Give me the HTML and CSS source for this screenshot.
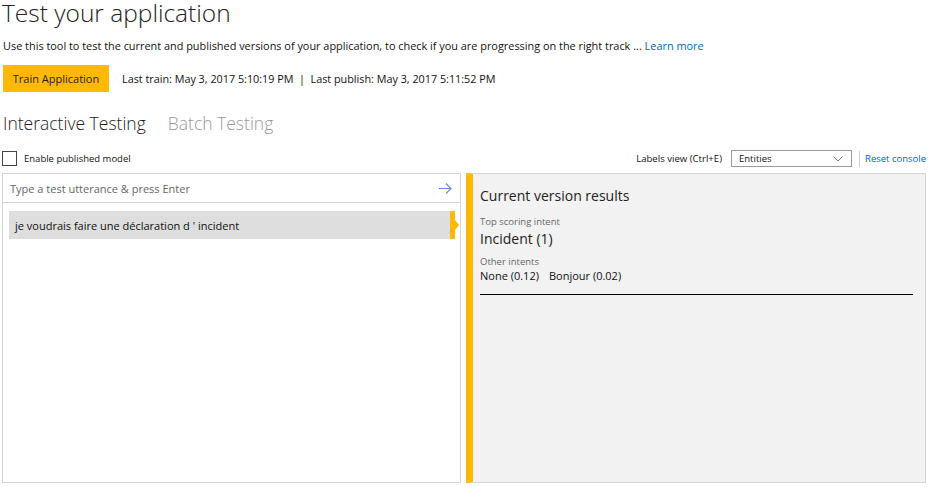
FILE: index.html
```html
<!DOCTYPE html>
<html>
<head>
<meta charset="utf-8">
<link rel="stylesheet" href="styles.css">
</head>
<body>
<div class="page">
  <h1 class="title">Test your application</h1>
  <p class="desc">Use this tool to test the current and published versions of your application, to check if you are progressing on the right track ... <a class="link" href="#">Learn more</a></p>
  <div class="trainrow">
    <button class="trainbtn">Train Application</button>
    <span class="traininfo">Last train: May 3, 2017 5:10:19 PM&nbsp; |&nbsp; Last publish: May 3, 2017 5:11:52 PM</span>
  </div>
  <div class="tabs">
    <span class="tab active">Interactive Testing</span>
    <span class="tab">Batch Testing</span>
  </div>
  <div class="controls">
    <label class="enable"><span class="checkbox"></span><span>Enable published model</span></label>
    <div class="rightctl">
      <span class="lvlabel">Labels view (Ctrl+E)</span>
      <div class="select"><span>Entities</span>
        <svg class="chev" width="10" height="6" viewBox="0 0 10 6"><path d="M0.5 0.5 L5 5 L9.5 0.5" fill="none" stroke="#777" stroke-width="1"/></svg>
      </div>
      <span class="sep"></span>
      <a class="reset" href="#">Reset console</a>
    </div>
  </div>
  <div class="panels">
    <div class="left">
      <div class="inputrow">
        <span class="placeholder">Type a test utterance &amp; press Enter</span>
        <svg class="arrow" width="13" height="11" viewBox="0 0 13 11"><path d="M0 5.5 H12 M7 0.5 L12 5.5 L7 10.5" fill="none" stroke="#6f86d6" stroke-width="1.1"/></svg>
      </div>
      <div class="utterances">
        <div class="utt">je voudrais faire une déclaration d ' incident</div>
      </div>
    </div>
    <div class="right">
      <h2 class="rtitle">Current version results</h2>
      <div class="small">Top scoring intent</div>
      <div class="top">Incident (1)</div>
      <div class="small other">Other intents</div>
      <div class="others"><span>None (0.12)</span><span>Bonjour (0.02)</span></div>
      <div class="rule"></div>
    </div>
  </div>
</div>
</body>
</html>
```
FILE: styles.css
```css
html, body { margin: 0; padding: 0; background: #fff; }
body { font-family: "Open Sans", "Noto Sans", sans-serif; color: #111; }
.page { padding: 0 7px 0 2px; width: 924px; }
.title { margin: 0; font-weight: 300; font-size: 24.5px; line-height: 25px; color: #222; white-space: nowrap; }
.desc { margin: 0; font-size: 10.9px; line-height: 16px; padding-top: 13px; padding-left: 1px; }
.link { color: #0067b8; text-decoration: none; }
.trainrow { display: flex; align-items: center; margin-top: 11px; height: 27px; }
.trainbtn { font-family: inherit; font-size: 11px; background: #ffb900; border: 0; height: 27px; width: 106px; padding: 0; color: #222; margin-left: 1px; box-sizing: border-box; }
.traininfo { font-size: 10.8px; margin-left: 13px; }
.tabs { display: flex; gap: 22px; margin-top: 18px; height: 26px; align-items: center; padding-left: 1px; }
.tab { font-size: 17.5px; font-weight: 300; color: #999; }
.tab.active { color: #222; }
.controls { display: flex; justify-content: space-between; align-items: center; margin-top: 14px; height: 17px; }
.enable { display: flex; align-items: center; font-size: 9.5px; gap: 7px; }
.checkbox { width: 13px; height: 13px; border: 1px solid #444; background: #fff; }
.rightctl { display: flex; align-items: center; }
.lvlabel { font-size: 9.6px; margin-right: 9px; }
.select { border: 1px solid #999; display: flex; align-items: center; justify-content: space-between; padding: 0 8px 0 7px; box-sizing: border-box; width: 121px; height: 17px; font-size: 9.5px; }
.sep { width: 1px; height: 16px; background: #ccc; margin: 0 5px 0 7px; }
.reset { color: #0067b8; text-decoration: none; font-size: 9.5px; }
.panels { display: flex; margin-top: 6px; height: 310px; gap: 5px; }
.left { width: 459px; border: 1px solid #d4d4d4; box-sizing: border-box; display: flex; flex-direction: column; }
.inputrow { height: 28px; border-bottom: 1px solid #d4d4d4; display: flex; align-items: center; justify-content: space-between; padding: 0 8px 0 7px; }
.placeholder { font-size: 11px; color: #666; }
.utterances { padding: 8px 5px 0 6px; }
.utt { position: relative; background: #dedede; height: 28px; display: flex; align-items: center; padding-left: 6px; font-size: 11px; border-right: 5px solid #ffb900; }
.utt::after { content: ""; position: absolute; right: -9px; top: 9px; border-left: 4px solid #ffb900; border-top: 5px solid transparent; border-bottom: 5px solid transparent; }
.right { flex: 1; background: #f2f2f2; border: 1px solid #d4d4d4; border-left: 7px solid #ffb900; box-sizing: border-box; padding: 12px 12px 0 7px; }
.rtitle { margin: 0; font-weight: 400; font-size: 14px; line-height: 20px; color: #222; }
.small { font-size: 9.5px; color: #666; margin-top: 9px; line-height: 13px; }
.top { font-size: 14px; line-height: 19px; color: #222; margin-top: 1px; }
.small.other { margin-top: 7px; }
.others { font-size: 11px; display: flex; gap: 10px; line-height: 15px; }
.rule { height: 1px; background: #000; margin-top: 11px; }
```
